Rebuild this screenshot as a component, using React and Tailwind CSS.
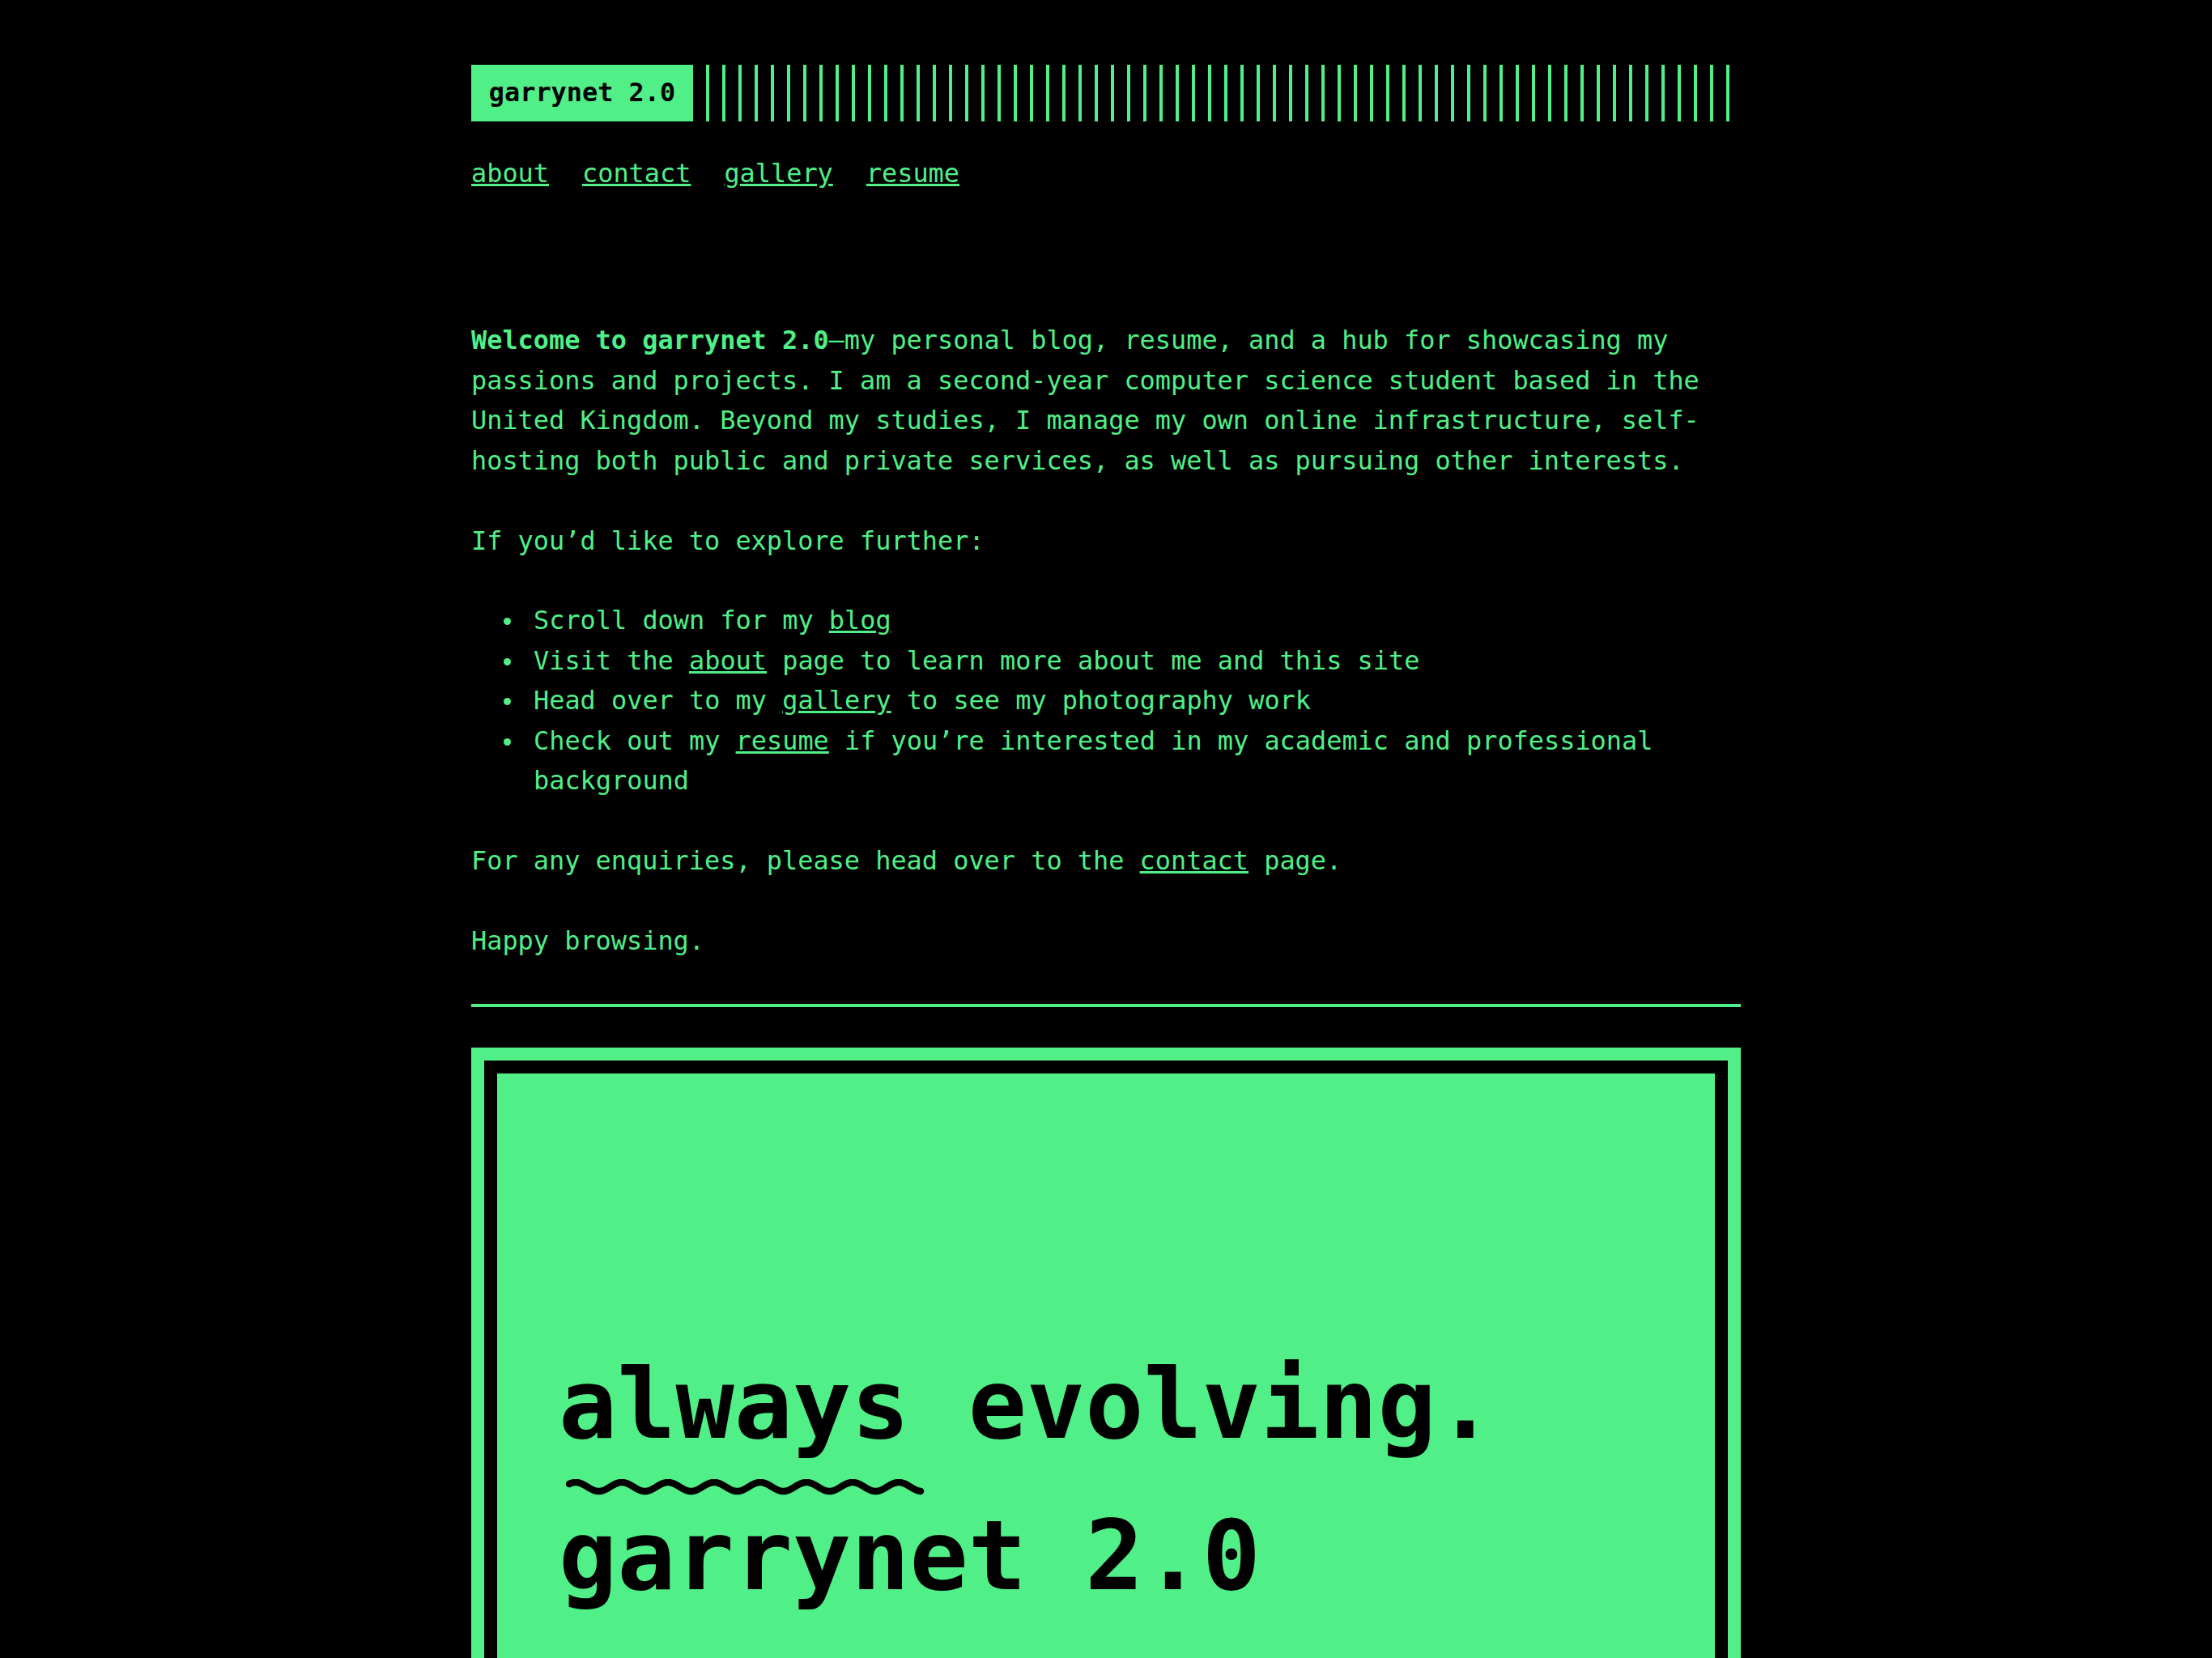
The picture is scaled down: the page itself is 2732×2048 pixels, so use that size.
import React from 'react';

const stripes = Array.from({ length: 64 }, (_, i) => i);

// squiggle under "always"
const wavePoints = Array.from({ length: 435 }, (_, i) => {
  const x = 4 + i;
  const y = 9.5 - 5.5 * Math.cos((2 * Math.PI * (x - 12)) / 57);
  return `${x},${y.toFixed(2)}`;
}).join(' ');

const Bullet = ({ children }) => (
  <li className="relative before:absolute before:left-[-37px] before:top-[21px] before:h-[9px] before:w-[9px] before:rounded-full before:bg-[#50ef87] before:content-['']">
    {children}
  </li>
);

const App = () => {
  return (
    <div className="min-h-screen bg-black text-[#50ef87] font-['DejaVu_Sans_Mono',monospace] text-[31.9px] leading-[49.4px]">
      <div className="mx-auto w-[1568px] pt-[80px]">
        {/* header */}
        <header className="flex h-[70px]">
          <div className="flex w-[274px] shrink-0 items-center justify-center bg-[#50ef87] font-bold text-black">
            garrynet 2.0
          </div>
          <div className="flex flex-1 overflow-hidden">
            {stripes.map(i => (
              <div key={i} className="ml-[16px] h-full w-[4px] shrink-0 bg-[#50ef87]" />
            ))}
          </div>
        </header>

        <nav className="mt-[40px] flex gap-[41px]">
          <a href="#" className="underline">about</a>
          <a href="#" className="underline">contact</a>
          <a href="#" className="underline">gallery</a>
          <a href="#" className="underline">resume</a>
        </nav>

        <main className="mt-[157px]">
          <p>
            <strong>Welcome to garrynet 2.0</strong>—my personal blog, resume, and a hub for showcasing my
            passions and projects. I am a second-year computer science student based in the United Kingdom.
            Beyond my studies, I manage my own online infrastructure, self-hosting both public and private
            services, as well as pursuing other interests.
          </p>

          <p className="mt-[49.5px]">If you’d like to explore further:</p>

          <ul className="mt-[49.5px] list-none pl-[77px]">
            <Bullet>Scroll down for my <a href="#" className="underline">blog</a></Bullet>
            <Bullet>Visit the <a href="#" className="underline">about</a> page to learn more about me and this site</Bullet>
            <Bullet>Head over to my <a href="#" className="underline">gallery</a> to see my photography work</Bullet>
            <Bullet>
              Check out my <a href="#" className="underline">resume</a> if you’re interested in my academic and
              professional background
            </Bullet>
          </ul>

          <p className="mt-[49.5px]">
            For any enquiries, please head over to the <a href="#" className="underline">contact</a> page.
          </p>

          <p className="mt-[49.5px]">Happy browsing.</p>

          <hr className="mt-[53px] h-[4px] border-0 bg-[#50ef87]" />

          {/* hero box */}
          <section className="mt-[50px] bg-[#50ef87] p-[16px]">
            <div className="bg-black p-[16px]">
              <div className="bg-[#50ef87] pl-[76px] pt-[315px] pb-[200px] text-black">
                <h1 className="text-[120px] font-bold leading-[187px]">
                  <span className="relative">
                    always
                    <svg
                      className="absolute left-[9px] top-[162px]"
                      width="446"
                      height="20"
                      viewBox="0 0 446 20"
                      fill="none"
                    >
                      <polyline
                        points={wavePoints}
                        stroke="#000"
                        strokeWidth="8.5"
                        strokeLinecap="round"
                        strokeLinejoin="round"
                      />
                    </svg>
                  </span>{' '}
                  evolving.
                  <br />
                  garrynet 2.0
                </h1>
              </div>
            </div>
          </section>
        </main>
      </div>
    </div>
  );
};

export default App;
